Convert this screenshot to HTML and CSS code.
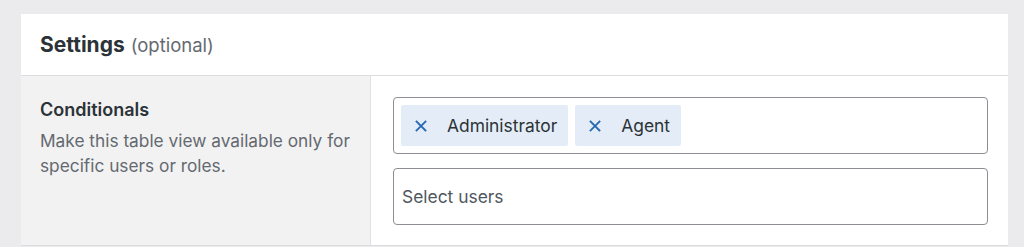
FILE: index.html
```html
<!DOCTYPE html>
<html>
<head>
<meta charset="utf-8">
<link rel="stylesheet" href="styles.css">
</head>
<body>
<div class="card">
  <div class="card-header">
    <span class="title">Settings</span> <span class="optional">(optional)</span>
  </div>
  <div class="row">
    <div class="label-col">
      <div class="label">Conditionals</div>
      <p class="desc">Make this table view available only for specific users or roles.</p>
    </div>
    <div class="field-col">
      <div class="input tags">
        <span class="tag">
          <svg class="x" width="12" height="12" viewBox="0 0 12 12"><path d="M1.5 1.5 L10.5 10.5 M10.5 1.5 L1.5 10.5" stroke="#2a6ab4" stroke-width="1.8" stroke-linecap="square" fill="none"/></svg>
          <span>Administrator</span>
        </span>
        <span class="tag">
          <svg class="x" width="12" height="12" viewBox="0 0 12 12"><path d="M1.5 1.5 L10.5 10.5 M10.5 1.5 L1.5 10.5" stroke="#2a6ab4" stroke-width="1.8" stroke-linecap="square" fill="none"/></svg>
          <span>Agent</span>
        </span>
      </div>
      <div class="input select">Select users</div>
    </div>
  </div>
</div>
</body>
</html>
```
FILE: styles.css
```css
* { box-sizing: border-box; }
html, body { margin: 0; padding: 0; }
body {
  background: #ebebed;
  font-family: Inter, "Noto Sans", sans-serif;
  color: #1d2327;
  padding: 14px 16px 0 21px;
  height: 247px;
  overflow: hidden;
}
.card {
  width: 987px;
  background: #fff;
  border-bottom: 1px solid #dcdcde;
}
.card-header {
  height: 62px;
  display: flex;
  align-items: center;
  padding-left: 19px;
  border-bottom: 1px solid #dcdcde;
  gap: 6px;
}
.title { font-size: 21px; font-weight: 700; color: #2c3338; }
.optional { font-size: 18.5px; color: #646970; }
.row { display: flex; height: 169px; }
.label-col {
  width: 350px;
  background: #f2f2f2;
  border-right: 1px solid #e2e2e4;
  padding: 22px 19px 0 19px;
}
.label { font-size: 18px; font-weight: 600; color: #2c3338; line-height: 24px; }
.desc { margin: 6px 0 0; font-size: 17.3px; line-height: 25px; color: #646970; }
.field-col {
  flex: 1;
  padding: 21px 20px 0 22px;
  display: flex;
  flex-direction: column;
  gap: 14px;
}
.input {
  height: 57px;
  border: 1px solid #8c8f94;
  border-radius: 4px;
  background: #fff;
}
.tags { display: flex; align-items: center; padding-left: 7px; gap: 7px; }
.tag {
  height: 41px;
  background: #e4edf7;
  border-radius: 2px;
  display: flex;
  align-items: center;
  padding: 0 11px 0 14px;
  gap: 20px;
  font-size: 17.4px;
  color: #2c3338;
}
.x { flex: none; }
.select {
  display: flex;
  align-items: center;
  padding-left: 8px;
  padding-bottom: 1px;
  font-size: 17.4px;
  color: #50575e;
}
```
